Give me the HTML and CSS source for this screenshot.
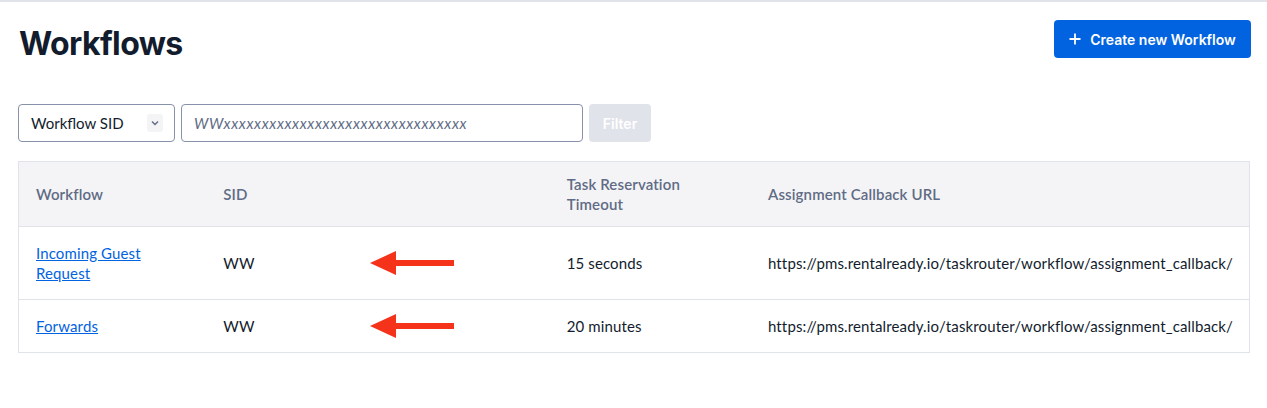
FILE: index.html
```html
<!DOCTYPE html>
<html lang="en">
<head>
  <meta charset="UTF-8" />
  <title>Workflows</title>
  <link rel="stylesheet" href="styles.css">
</head>
<body>
  <div class="page">
    <header class="page-header">
      <h1>Workflows</h1>
      <button class="btn-primary">
        <svg width="12" height="12" viewBox="0 0 12 12"><path d="M6 0.5v11M0.5 6h11" stroke="#fff" stroke-width="1.8" fill="none"/></svg>
        Create new Workflow
      </button>
    </header>

    <div class="filters">
      <div class="select">
        <span>Workflow SID</span>
        <span class="chevron">
          <svg width="8" height="6" viewBox="0 0 8 6"><path d="M1 1.5l3 3 3-3" stroke="#606b85" stroke-width="1.4" fill="none"/></svg>
        </span>
      </div>
      <input class="search" type="text" placeholder="WWxxxxxxxxxxxxxxxxxxxxxxxxxxxxxxxx" />
      <button class="btn-filter" disabled>Filter</button>
    </div>

    <table class="data">
      <thead>
        <tr>
          <th class="col-name">Workflow</th>
          <th class="col-sid">SID</th>
          <th class="col-timeout">Task Reservation<br>Timeout</th>
          <th>Assignment Callback URL</th>
        </tr>
      </thead>
      <tbody>
        <tr class="tall">
          <td><a href="#">Incoming Guest<br>Request</a></td>
          <td>
            <div class="sid">WW
              <svg class="arrow" width="84" height="26" viewBox="0 0 84 26"><path d="M0 13L26 1v9h58v6H26v9z" fill="#f5331a"/></svg>
            </div>
          </td>
          <td>15 seconds</td>
          <td>https://pms.rentalready.io/taskrouter/workflow/assignment_callback/</td>
        </tr>
        <tr>
          <td><a href="#">Forwards</a></td>
          <td>
            <div class="sid">WW
              <svg class="arrow" width="84" height="26" viewBox="0 0 84 26"><path d="M0 13L26 1v9h58v6H26v9z" fill="#f5331a"/></svg>
            </div>
          </td>
          <td>20 minutes</td>
          <td>https://pms.rentalready.io/taskrouter/workflow/assignment_callback/</td>
        </tr>
      </tbody>
    </table>
  </div>
</body>
</html>
```

FILE: styles.css
```css
body {
  margin: 0;
  border-top: 2px solid #e1e3ea;
  font-family: Lato, "Open Sans", sans-serif;
  color: #121c2d;
  background: #fff;
}
.page {
  padding: 0 16px 0 18px;
}
.page-header {
  display: flex;
  justify-content: space-between;
  align-items: flex-start;
  padding-top: 18px;
}
h1 {
  margin: 2px 0 0 1px;
  font-family: Inter, sans-serif;
  font-size: 32px;
  font-weight: 700;
  letter-spacing: -0.6px;
  line-height: 44px;
  color: #121c2d;
}
.btn-primary {
  display: flex;
  align-items: center;
  justify-content: center;
  gap: 9px;
  height: 38px;
  width: 197px;
  padding: 0;
  border: none;
  border-radius: 4px;
  background: #0263e0;
  color: #fff;
  font-family: Inter, sans-serif;
  font-size: 14px;
  font-weight: 600;
  white-space: nowrap;
  cursor: pointer;
}
.filters {
  display: flex;
  gap: 6px;
  margin-top: 38px;
}
.select {
  display: flex;
  align-items: center;
  justify-content: space-between;
  box-sizing: border-box;
  width: 157px;
  height: 38px;
  padding: 0 11px 0 12px;
  border: 1px solid #8891aa;
  border-radius: 4px;
  font-size: 15px;
}
.chevron {
  display: flex;
  align-items: center;
  justify-content: center;
  width: 16px;
  height: 18px;
  border-radius: 3px;
  background: #f4f4f6;
}
.search {
  box-sizing: border-box;
  width: 402px;
  height: 38px;
  padding: 0 12px;
  border: 1px solid #8891aa;
  border-radius: 4px;
  font-family: Lato, sans-serif;
  font-size: 15px;
  letter-spacing: 0.65px;
}
.search::placeholder {
  color: #606b85;
  font-style: italic;
}
.btn-filter {
  width: 62px;
  height: 38px;
  border: none;
  border-radius: 4px;
  background: #e1e3ea;
  color: #fff;
  font-family: Inter, sans-serif;
  font-size: 14px;
  font-weight: 600;
}
table.data {
  width: 1232px;
  margin-top: 19px;
  border-collapse: collapse;
  border: 1px solid #e1e3ea;
  font-size: 15px;
  letter-spacing: 0.13px;
}
.data th {
  height: 64px;
  padding: 0 16px 0 17px;
  background: #f4f4f6;
  color: #606b85;
  font-weight: 600;
  font-size: 15px;
  text-align: left;
  line-height: 20px;
}
.data td {
  height: 52px;
  padding: 0 16px 0 17px;
  border-top: 1px solid #e1e3ea;
  line-height: 20px;
}
.data tr.tall td {
  height: 72px;
}
.col-name { width: 155px; }
.col-sid { width: 311px; }
.col-timeout { width: 169px; }
.data a {
  color: #0263e0;
}
.sid {
  display: flex;
  align-items: center;
}
.arrow {
  margin-left: 115px;
}
```
